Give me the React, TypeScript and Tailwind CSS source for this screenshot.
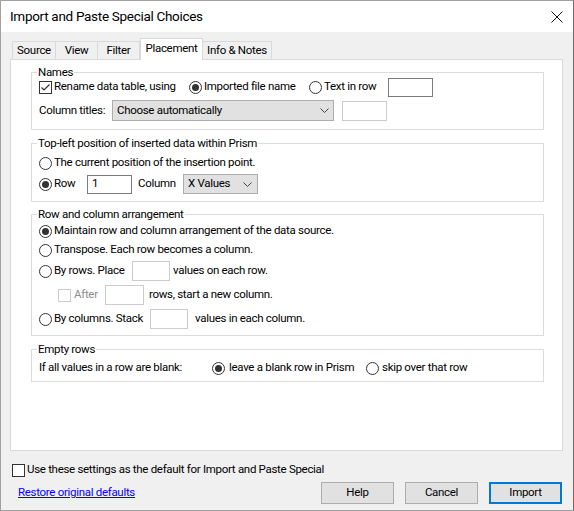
import type { ReactNode } from "react";

function Radio({ checked = false }: { checked?: boolean }) {
  return (
    <span className="inline-flex h-[13px] w-[13px] shrink-0 items-center justify-center rounded-full border border-[#333] bg-white">
      {checked && <span className="h-[7px] w-[7px] rounded-full bg-[#333]" />}
    </span>
  );
}

function Checkbox({ checked = false, disabled = false }: { checked?: boolean; disabled?: boolean }) {
  return (
    <span
      className={`inline-flex h-[13px] w-[13px] shrink-0 items-center justify-center border bg-white ${
        disabled ? "border-[#cccccc]" : "border-[#333]"
      }`}
    >
      {checked && (
        <svg width="11" height="11" viewBox="0 0 11 11">
          <path d="M1.5 5.5 L4 8 L9.5 2.5" fill="none" stroke="#333" strokeWidth="1.2" />
        </svg>
      )}
    </span>
  );
}

function Chevron() {
  return (
    <svg width="9" height="5" viewBox="0 0 9 5" className="shrink-0">
      <path d="M0.5 0.5 L4.5 4.5 L8.5 0.5" fill="none" stroke="#444" strokeWidth="1" />
    </svg>
  );
}

function Group({ title, className, children }: { title: string; className?: string; children: ReactNode }) {
  return (
    <fieldset className={`flex flex-col border border-[#dcdcdc] pl-[5px] ${className ?? ""}`}>
      <legend className="px-[1px] leading-[14px]">{title}</legend>
      {children}
    </fieldset>
  );
}

const tabs = [
  { label: "Source", w: "w-[44px]", cls: "" },
  { label: "View", w: "w-[42px]", cls: "border-l-0" },
  { label: "Filter", w: "w-[42px]", cls: "border-l-0" },
  { label: "Placement", w: "w-[63px]", cls: "", active: true },
  { label: "Info & Notes", w: "w-[69px]", cls: "border-l-0" },
];

export default function App() {
  return (
    <div className="flex h-[511px] w-[574px] flex-col border border-[#a0a0a0] border-r-[#6b6b6b] bg-[#f0f0f0] font-['Roboto',sans-serif] text-[11.5px] tracking-[-0.3px] text-black">
      {/* Title bar */}
      <div className="flex h-[31px] shrink-0 items-center justify-between bg-white pl-[9px] pr-[10px]">
        <span className="text-[13.5px] tracking-[-0.3px]">Import and Paste Special Choices</span>
        <svg width="12" height="12" viewBox="0 0 12 12">
          <path d="M0.5 0.5 L11.5 11.5 M11.5 0.5 L0.5 11.5" stroke="#111" strokeWidth="1" />
        </svg>
      </div>

      {/* Tabs */}
      <div className="ml-[11px] mt-[6px] flex h-[21px] items-end">
        {tabs.map((t) =>
          t.active ? (
            <div
              key={t.label}
              className={`relative z-10 -mb-px flex h-[22px] ${t.w} shrink-0 items-center justify-center border border-b-0 border-[#d9d9d9] bg-white pb-[1px]`}
            >
              {t.label}
            </div>
          ) : (
            <div
              key={t.label}
              className={`flex h-[18px] ${t.w} ${t.cls} shrink-0 items-center justify-center border-t border-r border-l border-[#d9d9d9] bg-[#f0f0f0]`}
            >
              {t.label}
            </div>
          )
        )}
      </div>

      {/* Panel */}
      <div className="ml-[9px] flex h-[392px] w-[553px] flex-col border border-[#d9d9d9] bg-white pl-[20px] pr-[18px] pt-[5px]">
        <Group title="Names" className="pb-[8px]">
          <div className="ml-[2px] flex h-[16px] items-center">
            <Checkbox checked />
            <span className="ml-[2px] w-[135px] whitespace-nowrap">Rename data table, using</span>
            <Radio checked />
            <span className="ml-[2px] w-[105px] whitespace-nowrap">Imported file name</span>
            <Radio />
            <span className="ml-[2px] w-[64px] whitespace-nowrap">Text in row</span>
            <div className="h-[19px] w-[45px] border border-[#7a7a7a] bg-white" />
          </div>
          <div className="ml-[2px] mt-[5px] flex h-[21px] items-center">
            <span className="w-[73px] whitespace-nowrap">Column titles:</span>
            <div className="flex h-[21px] w-[222px] items-center justify-between border border-[#adadad] bg-[#e1e1e1] pl-[4px] pr-[4px]">
              <span>Choose automatically</span>
              <Chevron />
            </div>
            <div className="ml-[8px] h-[20px] w-[45px] border border-[#cccccc] bg-white" />
          </div>
        </Group>

        <Group title="Top-left position of inserted data within Prism" className="mt-[6px] pb-[7px]">
          <div className="ml-[2px] mt-[5px] flex h-[16px] items-center">
            <Radio />
            <span className="ml-[2px] whitespace-nowrap">The current position of the insertion point.</span>
          </div>
          <div className="ml-[2px] mt-[3px] flex h-[20px] items-center">
            <Radio checked />
            <span className="ml-[2px] w-[33px]">Row</span>
            <div className="flex h-[19px] w-[45px] items-center border border-[#7a7a7a] bg-white pl-[4px]">1</div>
            <span className="ml-[6px] w-[45px]">Column</span>
            <div className="flex h-[20px] w-[75px] items-center justify-between border border-[#adadad] bg-[#e1e1e1] pl-[4px] pr-[5px]">
              <span>X Values</span>
              <Chevron />
            </div>
          </div>
        </Group>

        <Group title="Row and column arrangement" className="mt-[5px] pb-[6px]">
          <div className="ml-[2px] mt-[2px] flex h-[16px] items-center">
            <Radio checked />
            <span className="ml-[2px] whitespace-nowrap">Maintain row and column arrangement of the data source.</span>
          </div>
          <div className="ml-[2px] mt-[3px] flex h-[16px] items-center">
            <Radio />
            <span className="ml-[2px] whitespace-nowrap">Transpose. Each row becomes a column.</span>
          </div>
          <div className="ml-[2px] mt-[3px] flex h-[20px] items-center">
            <Radio />
            <span className="ml-[2px] w-[78px] whitespace-nowrap">By rows. Place</span>
            <div className="h-[20px] w-[38px] border border-[#cccccc] bg-white" />
            <span className="ml-[3px] whitespace-nowrap">values on each row.</span>
          </div>
          <div className="ml-[21px] mt-[4px] flex h-[20px] items-center">
            <Checkbox disabled />
            <span className="ml-[3px] w-[31px] text-[#8c8c8c]">After</span>
            <div className="h-[20px] w-[39px] border border-[#cccccc] bg-white" />
            <span className="ml-[5px] whitespace-nowrap">rows, start a new column.</span>
          </div>
          <div className="ml-[2px] mt-[4px] flex h-[20px] items-center">
            <Radio />
            <span className="ml-[2px] w-[96px] whitespace-nowrap">By columns. Stack</span>
            <div className="h-[20px] w-[38px] border border-[#cccccc] bg-white" />
            <span className="ml-[7px] whitespace-nowrap">values in each column.</span>
          </div>
        </Group>

        <Group title="Empty rows" className="mt-[6px] pb-[5px]">
          <div className="ml-[2px] mt-[4px] flex h-[16px] items-center">
            <span className="w-[173px] whitespace-nowrap">If all values in a row are blank:</span>
            <Radio checked />
            <span className="ml-[4px] w-[137px] whitespace-nowrap">leave a blank row in Prism</span>
            <Radio />
            <span className="ml-[3px] whitespace-nowrap">skip over that row</span>
          </div>
        </Group>
      </div>

      {/* Footer */}
      <div className="ml-[11px] mt-[11px] flex h-[16px] items-center">
        <Checkbox />
        <span className="ml-[2px] whitespace-nowrap">Use these settings as the default for Import and Paste Special</span>
      </div>
      <div className="mt-[4px] flex h-[22px] items-start pl-[17px] pr-[11px]">
        <a className="mt-[2px] leading-[16px] text-[#0000ff] underline">Restore original defaults</a>
        <div className="ml-auto flex gap-[11px]">
          <button className="h-[22px] w-[73px] border border-[#adadad] bg-[#e1e1e1]">Help</button>
          <button className="h-[22px] w-[73px] border border-[#adadad] bg-[#e1e1e1]">Cancel</button>
          <button className="h-[22px] w-[73px] border-2 border-[#0078d7] bg-[#e1e1e1]">Import</button>
        </div>
      </div>
    </div>
  );
}
